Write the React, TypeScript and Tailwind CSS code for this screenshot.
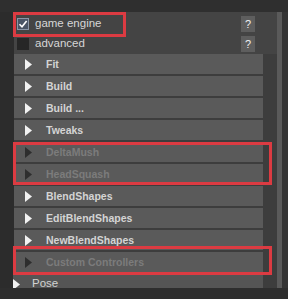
import React from 'react';

type Frame = { label: string; disabled?: boolean };

const FRAMES: Frame[] = [
  { label: 'Fit' },
  { label: 'Build' },
  { label: 'Build ...' },
  { label: 'Tweaks' },
  { label: 'DeltaMush', disabled: true },
  { label: 'HeadSquash', disabled: true },
  { label: 'BlendShapes' },
  { label: 'EditBlendShapes' },
  { label: 'NewBlendShapes' },
  { label: 'Custom Controllers', disabled: true },
];

function Arrow({ dim }: { dim?: boolean }) {
  return (
    <svg width="7" height="11" viewBox="0 0 7 11" className="shrink-0">
      <polygon points="0,0 7,5.5 0,11" fill={dim ? '#2e2e2e' : '#f2f2f2'} />
    </svg>
  );
}

function CheckRow({ label, checked }: { label: string; checked?: boolean }) {
  return (
    <div className="h-[20px] flex items-center justify-between pl-[3px] pr-[22px]">
      <div className="flex items-center gap-[6px]">
        <div
          className={`w-[12px] h-[12px] flex items-center justify-center ${
            checked ? 'bg-[#4a5566] border border-[#8a96a8]' : 'bg-[#262626]'
          }`}
        >
          {checked && (
            <svg width="10" height="10" viewBox="0 0 10 10">
              <path d="M1.5 5.2 L4 7.8 L8.6 2" stroke="#ffffff" strokeWidth="1.6" fill="none" />
            </svg>
          )}
        </div>
        <span className="text-[11.5px] text-[#d6d6d6] leading-none">{label}</span>
      </div>
      <div className="w-[14px] h-[16px] bg-[#5e5e5e] flex items-center justify-center text-[11px] text-[#eeeeee] leading-none">
        ?
      </div>
    </div>
  );
}

export default function App() {
  return (
    <div
      className="relative w-[288px] h-[299px] overflow-hidden bg-[#303030] flex flex-col"
      style={{ fontFamily: '"Liberation Sans", Arial, sans-serif' }}
    >
      <div className="h-[12px] shrink-0 bg-[#2f2f2f]" />

      <div className="flex flex-1 min-h-0">
        <div className="w-[14px] shrink-0 bg-[#2c2c2c]" />

        <div className="flex-1 bg-[#444444] flex flex-col">
          <div className="pt-[2px]">
            <CheckRow label="game engine" checked />
            <CheckRow label="advanced" />
          </div>

          <div className="flex flex-col gap-[2px] pr-[14px] bg-[#3d3d3d]">
            {FRAMES.map((f) => (
              <div key={f.label} className="h-[20px] bg-[#5a5a5a] flex items-center pl-[11px] gap-[14px]">
                <Arrow dim={f.disabled} />
                <span
                  className={`text-[10.5px] font-bold leading-none ${
                    f.disabled ? 'text-[#7c7c7c]' : 'text-[#d4d4d4]'
                  }`}
                >
                  {f.label}
                </span>
              </div>
            ))}
            <div className="h-[20px] bg-[#555555] flex items-center gap-[12px] -ml-[1px]">
              <Arrow />
              <span className="text-[11.5px] text-[#d2d2d2] leading-none">Pose</span>
            </div>
          </div>
        </div>

        <div className="w-[5px] shrink-0 bg-[#5a5a5a]" />
        <div className="w-[6px] shrink-0 bg-[#343434]" />
      </div>

      <div className="h-[11px] shrink-0 bg-[#2e2e2e]" />

      {/* annotation boxes */}
      <div className="absolute left-[13px] top-[12px] w-[113px] h-[25px] border-[3px] border-[#dc3b42]" />
      <div className="absolute left-[13px] top-[142px] w-[259px] h-[43px] border-[3px] border-[#dc3b42]" />
      <div className="absolute left-[13px] top-[246px] w-[259px] h-[29px] border-[3px] border-[#dc3b42]" />
    </div>
  );
}
